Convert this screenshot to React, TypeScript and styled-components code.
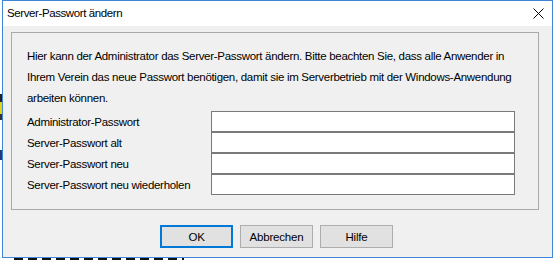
import React from "react";
import styled, { createGlobalStyle } from "styled-components";

const GlobalStyle = createGlobalStyle`
  html, body { margin: 0; padding: 0; background: #ffffff; }
  body { font-family: "Liberation Sans", Arial, sans-serif; }
  * { box-sizing: border-box; }
`;

const Desktop = styled.div`
  position: relative;
  width: 554px;
  height: 260px;
  overflow: hidden;
  background: #ffffff;
`;

const BackdropStrip = styled.div`
  position: absolute;
  left: 14px;
  top: 258px;
  width: 170px;
  height: 2px;
  background: repeating-linear-gradient(
    90deg,
    #111 0px,
    #111 9px,
    transparent 9px,
    transparent 14px
  );
`;

const BackdropMark = styled.div<{ $top: number; $h: number; $color: string }>`
  position: absolute;
  left: 0;
  top: ${(p) => p.$top}px;
  width: 2px;
  height: ${(p) => p.$h}px;
  background: ${(p) => p.$color};
`;

const Window = styled.div`
  position: absolute;
  left: 2px;
  top: 0;
  width: 551px;
  height: 258px;
  border: 1px solid #3f86d6;
  background: #f0f0f0;
  display: flex;
  flex-direction: column;
  font-family: "Liberation Sans", Arial, sans-serif;
  font-size: 11.5px;
  letter-spacing: -0.3px;
  color: #000;
`;

const TitleBar = styled.div`
  height: 25px;
  flex: 0 0 25px;
  background: #ffffff;
  display: flex;
  align-items: center;
  justify-content: space-between;
  padding-left: 4px;
`;

const Title = styled.span`
  font-size: 11.5px;
  letter-spacing: -0.4px;
  padding-bottom: 1px;
`;

const CloseButton = styled.div`
  width: 28px;
  height: 25px;
  display: flex;
  align-items: center;
  justify-content: center;
`;

const Body = styled.div`
  flex: 1;
  display: flex;
  flex-direction: column;
  padding: 6px 0 9px 8px;
`;

const GroupBox = styled.div`
  width: 528px;
  border: 1px solid #a9a9a9;
  padding: 13px 15px 14px 15px;
`;

const Intro = styled.p`
  margin: 0 0 2px 0;
  line-height: 21px;
  white-space: nowrap;
`;

const FieldGrid = styled.div`
  display: grid;
  grid-template-columns: 184px 304px;
  grid-auto-rows: 21px;
`;

const Label = styled.label`
  display: flex;
  align-items: center;
  padding-top: 1px;
  white-space: nowrap;
`;

const Input = styled.input`
  height: 21px;
  width: 304px;
  margin: 0;
  border: 1px solid #7a7a7a;
  background: #ffffff;
  font-family: inherit;
  font-size: 12px;
  padding: 0 3px;
  outline: none;
`;

const ButtonRow = styled.div`
  display: flex;
  justify-content: center;
  gap: 7px;
  margin-top: 15px;
  padding-right: 10px;
`;

const Button = styled.button<{ $default?: boolean }>`
  width: 73px;
  height: 23px;
  margin: 0;
  padding: 0;
  background: #e1e1e1;
  border: ${(p) => (p.$default ? "2px solid #0078d7" : "1px solid #adadad")};
  font-family: inherit;
  font-size: 11.5px;
  letter-spacing: -0.2px;
  color: #000;
`;

const fields = [
  "Administrator-Passwort",
  "Server-Passwort alt",
  "Server-Passwort neu",
  "Server-Passwort neu wiederholen",
];

export default function App() {
  return (
    <>
      <GlobalStyle />
      <Desktop>
        <BackdropStrip />
        <BackdropMark $top={94} $h={8} $color="#222" />
        <BackdropMark $top={102} $h={12} $color="#e3d21a" />
        <BackdropMark $top={114} $h={6} $color="#333" />
        <BackdropMark $top={150} $h={10} $color="#223a7a" />
        <Window>
          <TitleBar>
            <Title>Server-Passwort ändern</Title>
            <CloseButton>
              <svg width="11" height="11" viewBox="0 0 11 11">
                <path d="M0.5 0.5 L10.5 10.5 M10.5 0.5 L0.5 10.5" stroke="#000" strokeWidth="1" fill="none" />
              </svg>
            </CloseButton>
          </TitleBar>
          <Body>
            <GroupBox>
              <Intro>
                Hier kann der Administrator das Server-Passwort ändern. Bitte beachten Sie, dass alle Anwender in
                <br />
                Ihrem Verein das neue Passwort benötigen, damit sie im Serverbetrieb mit der Windows-Anwendung
                <br />
                arbeiten können.
              </Intro>
              <FieldGrid>
                {fields.map((f) => (
                  <React.Fragment key={f}>
                    <Label>{f}</Label>
                    <Input type="password" />
                  </React.Fragment>
                ))}
              </FieldGrid>
            </GroupBox>
            <ButtonRow>
              <Button $default>OK</Button>
              <Button>Abbrechen</Button>
              <Button>Hilfe</Button>
            </ButtonRow>
          </Body>
        </Window>
      </Desktop>
    </>
  );
}
